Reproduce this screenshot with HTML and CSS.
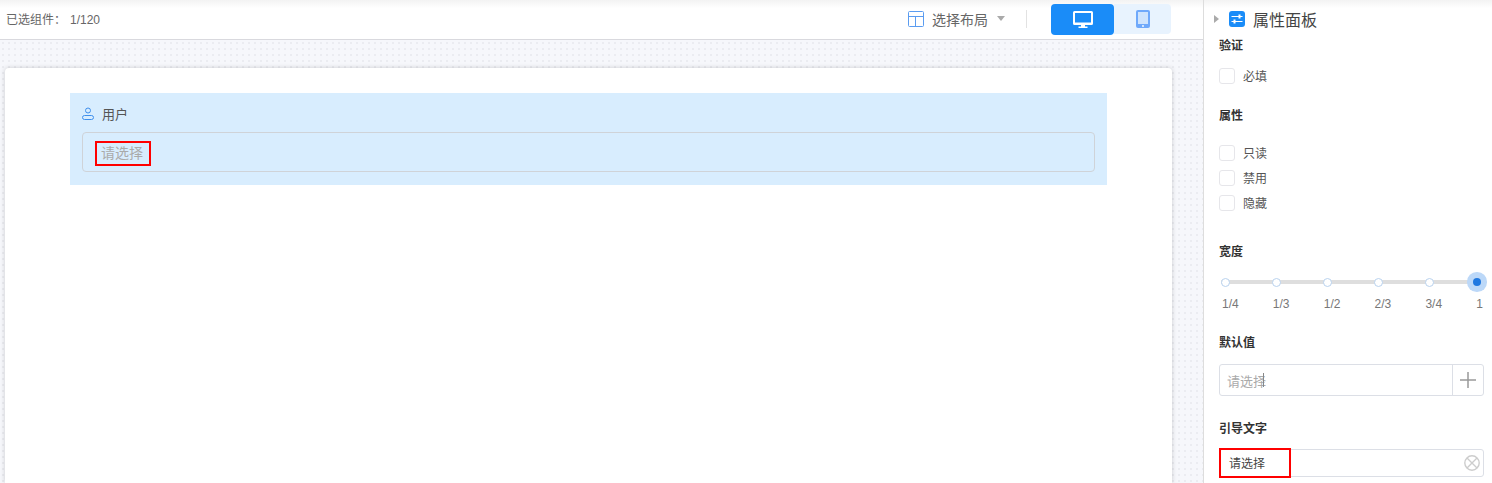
FILE: index.html
```html
<!DOCTYPE html>
<html lang="zh">
<head>
<meta charset="utf-8">
<title>属性面板</title>
<link rel="stylesheet" href="styles.css">
</head>
<body>
<div class="app">
  <main class="main">
    <header class="topbar">
      <div class="count">已选组件：<span class="count-num">1/120</span></div>
      <div class="top-actions">
        <svg class="layout-icon" width="16" height="16" viewBox="0 0 16 16" fill="none" stroke="#5b9cf0" stroke-width="1"><rect x="0.5" y="0.5" width="15" height="15" rx="1"/><path d="M0.5 5.5H15.5M7.5 5.5V15.5"/></svg>
        <span class="layout-label">选择布局</span>
        <span class="caret"></span>
        <span class="divider"></span>
        <div class="device-group">
          <button class="device device-pc">
            <svg width="20" height="18" viewBox="0 0 20 18"><path fill="#fff" d="M1.5 0h17A1.5 1.5 0 0 1 20 1.500v11a1.500 1.500 0 0 1-1.500 1.500H12v1.500h2.500V17h-9v-1.500H8V14H1.500A1.500 1.500 0 0 1 0 12.500v-11A1.500 1.500 0 0 1 1.500 0z"/><rect x="2" y="2" width="16" height="9.500" fill="#1a8cf8"/></svg>
          </button>
          <button class="device device-mobile">
            <svg width="14" height="18" viewBox="0 0 14 18"><rect width="14" height="18" rx="2" fill="#6fa9fb"/><rect x="2" y="2" width="10" height="12" fill="#cfe4fd"/><circle cx="7" cy="16" r="0.900" fill="#fff"/></svg>
          </button>
        </div>
      </div>
    </header>
    <section class="canvas">
      <div class="card">
        <div class="field-block">
          <div class="field-label">
            <svg width="12" height="13" viewBox="0 0 12 13" fill="none" stroke="#3f8fec" stroke-width="1"><circle cx="6" cy="3.500" r="2.500"/><rect x="0.500" y="8.500" width="11" height="4" rx="2"/></svg>
            <span>用户</span>
          </div>
          <div class="field-box"><span class="mark-text">请选择</span></div>
        </div>
      </div>
    </section>
  </main>
  <aside class="panel">
    <div class="panel-title">
      <span class="tri"></span>
      <svg width="16" height="16" viewBox="0 0 16 16"><rect width="16" height="16" rx="3" fill="#1a8cf8"/><path d="M2.500 5.500h11M2.500 10.500h11" stroke="#fff" stroke-width="1.200" fill="none"/><path d="M9.500 3.500h2v4h-2zM4.500 8.500h2v4h-2z" fill="#fff"/></svg>
      <span class="panel-name">属性面板</span>
    </div>
    <h4 class="sec sec-verify">验证</h4>
    <label class="check check-required"><i class="box"></i>必填</label>
    <h4 class="sec sec-attr">属性</h4>
    <div class="check-list">
      <label class="check"><i class="box"></i>只读</label>
      <label class="check"><i class="box"></i>禁用</label>
      <label class="check"><i class="box"></i>隐藏</label>
    </div>
    <h4 class="sec sec-width">宽度</h4>
    <div class="slider">
      <span class="stop"></span><span class="stop"></span><span class="stop"></span><span class="stop"></span><span class="stop"></span><span class="stop stop-on"></span>
    </div>
    <div class="slider-labels"><span>1/4</span><span>1/3</span><span>1/2</span><span>2/3</span><span>3/4</span><span>1</span></div>
    <h4 class="sec sec-default">默认值</h4>
    <div class="input-add">
      <span class="ph">请选择<i class="text-caret"></i></span>
      <span class="add">
        <svg width="16" height="16" viewBox="0 0 16 16" stroke="#999" stroke-width="1.500"><path d="M8 0V16M0 8H16"/></svg>
      </span>
    </div>
    <h4 class="sec sec-guide">引导文字</h4>
    <div class="input-guide">
      <span class="guide-text">请选择</span>
      <svg class="clear" width="16" height="16" viewBox="0 0 16 16" fill="none" stroke="#cdcdcd" stroke-width="1.400"><circle cx="8" cy="8" r="7.200"/><path d="M3 3 13 13M13 3 3 13"/></svg>
    </div>
  </aside>
</div>
</body>
</html>
```

FILE: styles.css
```css
* { box-sizing: border-box; }
html, body { margin: 0; height: 100%; overflow: hidden; }
body { font-family: "Liberation Sans", "Noto Sans CJK SC", sans-serif; font-size: 12px; color: #555; background: #fff; }
.app { display: flex; height: 483px; width: 1492px; }
.main { width: 1203px; display: flex; flex-direction: column; }
.topbar { height: 40px; flex: none; display: flex; align-items: center; justify-content: space-between; border-bottom: 1px solid #d9d9de; background: linear-gradient(#f3f3f3, #fff 8px); padding: 0 32px 2px 6px; }
.count { color: #666; }
.count-num { margin-left: 4px; }
.top-actions { display: flex; align-items: center; }
.layout-label { font-size: 14px; color: #666; margin: 0 1px 0 8px; }
.caret { margin-left: 8px; width: 0; height: 0; border: 4px solid transparent; border-top: 5px solid #aaa; border-bottom: 0; }
.divider { width: 1px; height: 18px; background: #e2e2e2; margin: 0 24px 0 21px; }
.device-group { display: flex; align-items: flex-start; margin-top: 2px; }
.device { border: 0; padding: 0; display: flex; align-items: center; justify-content: center; }
.device-pc { width: 63px; height: 31px; background: #1a8cf8; border-radius: 4px; }
.device-mobile { width: 57px; height: 30px; background: #e8f3fe; border-radius: 0 4px 4px 0; }
.canvas { flex: 1; padding: 28px 31px 0 5px; background-color: #f6f7fb; background-image: radial-gradient(#ebecf1 1px, transparent 1px); background-size: 6px 6px; }
.card { height: 100%; background: #fff; border-radius: 4px 4px 0 0; box-shadow: 0 0 5px rgba(0,0,0,.18); padding: 25px 65px 0; }
.field-block { background: #d8edfe; height: 92px; padding: 11px 12px 0; }
.field-label { display: flex; align-items: center; gap: 8px; font-size: 13px; color: #555; height: 18px; }
.field-box { margin-top: 10px; height: 40px; border: 1px solid #cfd3d8; border-radius: 4px; padding: 8px 12px 0 12px; }
.mark-text { display: inline-block; font-size: 14px; color: #aaa; padding: 0 6px; width: 56px; height: 25px; line-height: 24px; outline: 2px solid #f00; outline-offset: -2px; white-space: nowrap; }
.panel { flex: 1; border-left: 1px solid #ddd; padding: 0 8px 0 15px; background: linear-gradient(#f3f3f3, #fff 8px); min-width: 0; }
.panel-title { display: flex; align-items: center; height: 38px; margin: 0 0 1px -5px; }
.tri { width: 0; height: 0; border: 4px solid transparent; border-left: 5px solid #aaa; border-right: 0; margin-right: 10px; }
.panel-name { font-size: 16px; color: #444; margin-left: 8px; }
.sec { margin: 0; font-size: 12px; color: #333; font-weight: bold; line-height: 14px; }
.check { display: flex; align-items: center; height: 25px; color: #555; }
.check-required { margin-top: 10px; }
.box { width: 16px; height: 16px; border: 1px solid #e6e6ea; border-radius: 3px; margin-right: 8px; background: #fff; }
.sec-attr { margin-top: 21px; }
.check-list { margin-top: 17px; }
.sec-width { margin-top: 30px; }
.slider { position: relative; display: flex; justify-content: space-between; align-items: center; height: 10px; margin: 18px 0 0 2px; width: 260px; }
.slider::before { content: ""; position: absolute; left: 0; right: 3px; top: 3px; height: 4px; background: #dedede; }
.stop { position: relative; width: 9px; height: 9px; border-radius: 50%; background: #fff; border: 1px solid #b9d2ee; }
.stop-on { width: 8px; height: 8px; margin-left: -3px; background: #1f78e0; border: 0; box-shadow: 0 0 0 6px #bcd8f8; }
.slider-labels { display: flex; justify-content: space-between; width: 264px; margin-top: 10px; padding-left: 3px; color: #777; }
.sec-default { margin-top: 25px; }
.input-add { display: flex; justify-content: space-between; align-items: center; height: 32px; margin-top: 14px; border: 1px solid #dcdfe6; border-radius: 3px; font-size: 14px; }
.ph { position: relative; color: #aaa; margin-left: 7px; font-size: 13px; }
.text-caret { position: absolute; left: 36px; top: 2px; width: 1px; height: 14px; background: #888; }
.add { width: 31px; height: 100%; border-left: 1px solid #dcdfe6; display: flex; align-items: center; justify-content: center; }
.sec-guide { margin-top: 26px; }
.input-guide { display: flex; justify-content: space-between; align-items: center; height: 28px; margin-top: 13px; border: 1px solid #dcdfe6; border-radius: 3px; padding-right: 3px; }
.guide-text { display: flex; align-items: center; width: 72px; height: 30px; margin: -1px 0 0 -1px; outline: 2px solid #f00; outline-offset: -2px; padding-left: 10px; color: #444; font-size: 12px; }
```
